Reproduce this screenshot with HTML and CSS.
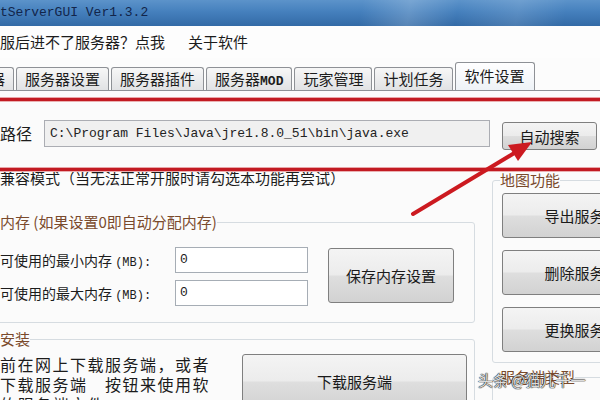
FILE: index.html
```html
<!DOCTYPE html>
<html lang="zh">
<head>
<meta charset="utf-8">
<link rel="stylesheet" href="styles.css">
</head>
<body>
<div class="page">
  <div class="titlebar"><span class="title">tServerGUI Ver1.3.2</span></div>
  <div class="menubar"><span class="menu-item">服后进不了服务器？点我</span><span class="menu-item">关于软件</span></div>
  <div class="tabs">
    <div class="tab first">器</div>
    <div class="tab">服务器设置</div>
    <div class="tab">服务器插件</div>
    <div class="tab">服务器<span class="mono">MOD</span></div>
    <div class="tab">玩家管理</div>
    <div class="tab">计划任务</div>
    <div class="tab active">软件设置</div>
  </div>
  <div class="panel">
    <div class="path-row">
      <span class="path-label">路径</span>
      <div class="path-input">C:\Program Files\Java\jre1.8.0_51\bin\java.exe</div>
      <button class="btn search">自动搜索</button>
    </div>
    <div class="main">
      <div class="left">
        <div class="compat">兼容模式（当无法正常开服时请勾选本功能再尝试）</div>
        <fieldset class="group memory">
          <legend>内存 (如果设置0即自动分配内存)</legend>
          <div class="mem">
            <div class="mem-fields">
              <div class="mem-row"><span class="mem-label">可使用的最小内存 <span class="mono-s">(MB):</span></span><div class="mem-input">0</div></div>
              <div class="mem-row"><span class="mem-label">可使用的最大内存 <span class="mono-s">(MB):</span></span><div class="mem-input">0</div></div>
            </div>
            <button class="btn save">保存内存设置</button>
          </div>
        </fieldset>
        <fieldset class="group install">
          <legend>安装</legend>
          <div class="install-body">
            <div class="install-text">
              <div>前在网上下载服务端，或者</div>
              <div>下载服务端　按钮来使用软</div>
              <div>的服务端文件</div>
            </div>
            <button class="btn download">下载服务端</button>
          </div>
        </fieldset>
      </div>
      <div class="right">
        <fieldset class="group map">
          <legend>地图功能</legend>
          <div class="map-buttons">
            <button class="btn map-btn">导出服务器地图</button>
            <button class="btn map-btn">删除服务器地图</button>
            <button class="btn map-btn">更换服务器地图</button>
          </div>
        </fieldset>
        <fieldset class="group type">
          <legend>服务端类型</legend>
        </fieldset>
      </div>
    </div>
  </div>
  <svg class="annot" width="600" height="400" viewBox="0 0 600 400">
    <rect x="0" y="97" width="600" height="1" fill="#e9a5a8"/>
    <rect x="0" y="98" width="600" height="3" fill="#c21a22"/>
    <rect x="0" y="101" width="600" height="1" fill="#eab0b2"/>
    <rect x="0" y="167" width="600" height="1" fill="#e9a5a8"/>
    <rect x="0" y="168" width="600" height="3" fill="#c21a22"/>
    <rect x="0" y="171" width="600" height="1" fill="#eab0b2"/>
    <line x1="413" y1="214" x2="516" y2="152" stroke="#cc1a20" stroke-width="4" stroke-linecap="round"/>
    <polygon points="532,142 518,161 508,145" fill="#cc1a20"/>
  </svg>
  <div class="watermark">头条 @猫儿千一</div>
</div>
</body>
</html>
```
FILE: styles.css
```css
html, body {
  margin: 0;
  padding: 0;
}
body {
  width: 600px;
  height: 400px;
  overflow: hidden;
  font-family: "Noto Sans CJK SC", "Noto Sans", sans-serif;
  font-size: 15px;
  color: #1c1c1c;
  background: #fafafa;
}
.page {
  position: relative;
  width: 600px;
  height: 400px;
  overflow: hidden;
}
.titlebar {
  height: 26px;
  display: flex;
  align-items: center;
  background: linear-gradient(100deg, rgba(255,255,255,0) 60%, rgba(255,255,255,0.18) 68%, rgba(255,255,255,0) 76%, rgba(255,255,255,0.12) 86%, rgba(255,255,255,0) 94%),
              linear-gradient(180deg, #5c93ca 0%, #4580bd 45%, #336aa6 100%);
}
.title {
  font-family: "Liberation Mono", monospace;
  font-size: 13px;
  color: #12254a;
  line-height: 20px;
}
.menubar {
  height: 32px;
  display: flex;
  align-items: center;
  gap: 23px;
  background: #fdfdfd;
}
.menu-item {
  line-height: 20px;
}
.tabs {
  height: 32px;
  display: flex;
  align-items: flex-end;
  gap: 2px;
  background: #fcfcfc;
}
.tab {
  box-sizing: border-box;
  height: 23px;
  line-height: 21px;
  padding: 0 8px;
  border: 1px solid #8e9196;
  border-bottom: none;
  border-radius: 3px 3px 0 0;
  background: linear-gradient(#f7f7f7, #e1e2e4);
  white-space: nowrap;
}
.tab.first {
  margin-left: -19px;
}
.tab.active {
  height: 28px;
  line-height: 25px;
  padding: 0 9px;
  background: linear-gradient(#ffffff, #eef2f7);
}
.mono {
  font-family: "Liberation Mono", monospace;
  font-size: 13px;
  font-weight: bold;
}
.mono-s {
  font-family: "Liberation Mono", monospace;
  font-size: 12px;
}
.panel {
  border-top: 1px solid #8e9196;
  background: #fbfbfb;
  height: 309px;
}
.path-row {
  display: flex;
  align-items: flex-start;
  padding-top: 29px;
  height: 30px;
}
.path-label {
  width: 44px;
  flex: none;
  font-size: 16px;
  line-height: 27px;
}
.path-input {
  box-sizing: border-box;
  width: 446px;
  height: 27px;
  flex: none;
  border: 1px solid #abadb3;
  background: #f0f0f0;
  font-family: "Liberation Mono", monospace;
  font-size: 13px;
  line-height: 25px;
  padding-left: 5px;
  white-space: nowrap;
  color: #222;
}
.btn {
  box-sizing: border-box;
  font-family: "Noto Sans CJK SC", sans-serif;
  font-size: 15px;
  color: #1a1a1a;
  border: 1px solid #7f7f7f;
  border-radius: 3px;
  background: linear-gradient(#f4f4f4 0%, #ececec 48%, #dedede 52%, #d2d2d2 100%);
  padding: 0;
  flex: none;
  white-space: nowrap;
}
.btn.search {
  margin-left: 12px;
  margin-top: 2px;
  width: 95px;
  height: 28px;
}
.main {
  display: flex;
}
.left {
  width: 478px;
  flex: none;
  padding-top: 18px;
}
.right {
  width: 240px;
  flex: none;
  margin-left: 14px;
  padding-top: 20px;
}
.compat {
  height: 20px;
  line-height: 20px;
  white-space: nowrap;
}
.group {
  box-sizing: border-box;
  margin: 0;
  border: 1px solid #d6dce1;
  border-radius: 3px;
}
.group legend {
  padding: 0;
  line-height: 20px;
  color: #7a4a2c;
  white-space: nowrap;
}
.memory {
  margin: 24px 0 0 -12px;
  width: 487px;
  padding: 15px 0 16px 11px;
}
.mem {
  display: flex;
  align-items: flex-start;
  gap: 20px;
}
.mem-fields {
  display: flex;
  flex-direction: column;
  gap: 7px;
}
.mem-row {
  display: flex;
  align-items: center;
}
.mem-label {
  width: 175px;
  font-size: 14px;
  white-space: nowrap;
}
.mem-input {
  box-sizing: border-box;
  width: 133px;
  height: 26px;
  border: 1px solid #a6adb5;
  background: #fff;
  font-family: "Liberation Mono", monospace;
  font-size: 13px;
  line-height: 24px;
  padding-left: 4px;
}
.btn.save {
  width: 126px;
  height: 55px;
  margin-top: 1px;
}
.install {
  margin: 6px 0 0 -12px;
  width: 487px;
  padding: 5px 7px 0 11px;
  height: 90px;
}
.install-body {
  display: flex;
  justify-content: space-between;
  align-items: flex-start;
}
.install-text {
  font-size: 16px;
  letter-spacing: 1.5px;
  line-height: 20px;
  white-space: nowrap;
}
.btn.download {
  width: 225px;
  height: 55px;
}
.map {
  width: 240px;
  padding: 3px 0 10px 9px;
}
.map legend {
  margin-left: -2px;
}
.map-buttons {
  display: flex;
  flex-direction: column;
  gap: 12px;
}
.btn.map-btn {
  width: 190px;
  height: 45px;
}
.type {
  margin-top: 4px;
  width: 240px;
  height: 60px;
  padding: 0 0 0 9px;
}
.type legend {
  margin-left: -2px;
}
.annot {
  position: absolute;
  left: 0;
  top: 0;
  pointer-events: none;
}
.watermark {
  position: absolute;
  left: 478px;
  top: 370px;
  font-size: 15px;
  line-height: 20px;
  color: rgba(255, 255, 255, 0.85);
  text-shadow: 0 0 1px #222, 0 0 1px #222, 0 0 1px #222;
  white-space: nowrap;
}
```
